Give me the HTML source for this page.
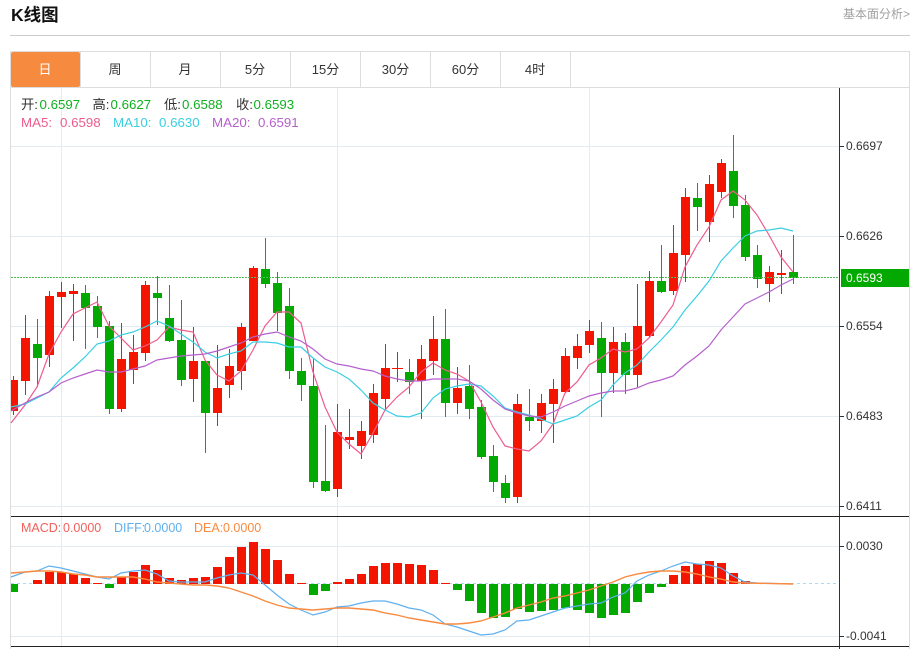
<!DOCTYPE html>
<html lang="zh"><head><meta charset="utf-8"><title>K线图</title>
<style>
html,body{margin:0;padding:0;background:#fff;width:915px;height:649px;overflow:hidden}
svg{position:absolute;left:0;top:0;display:block}
text{font-family:"Liberation Sans","Noto Sans CJK SC",sans-serif}
</style></head><body>
<svg width="915" height="649" viewBox="0 0 915 649" xmlns="http://www.w3.org/2000/svg">
<text x="11" y="21" font-size="17.500" font-weight="700" fill="#111">K线图</text>
<text x="843" y="18" font-size="12" fill="#a0a0a0">基本面分析&gt;</text>
<path d="M10 35.500H910" stroke="#ccc" fill="none"/>
<!-- frame -->
<path d="M10.500 51.500H909.500V649M10.500 51.500V649M10 87.500H910" stroke="#ddd" fill="none"/>
<path d="M80.500 52V87M150.500 52V87M220.500 52V87M290.500 52V87M360.500 52V87M430.500 52V87M500.500 52V87M570.500 52V87" stroke="#ddd" fill="none"/>
<rect x="11" y="52" width="69" height="35" rx="2" fill="#f68b3f"/>
<g font-size="13" text-anchor="middle" fill="#333">
<text x="45" y="74" fill="#fff">日</text><text x="115" y="74">周</text><text x="185" y="74">月</text><text x="255" y="74">5分</text><text x="325.500" y="74">15分</text><text x="395.500" y="74">30分</text><text x="465.500" y="74">60分</text><text x="535" y="74">4时</text>
</g>
<!-- grid -->
<path d="M11 146.500H839M11 236.500H839M11 326.500H839M11 416.500H839M11 506.500H839M11 546.500H839M11 636.500H839M61.500 88V646M337.500 88V646M589.500 88V646" stroke="#e1ebf3" fill="none"/>
<!-- candles -->
<path d="M13.500 376V415M25.500 315V395M49.500 291V367M61.500 282V328M73.500 284V341M121.500 323V412M133.500 335V384M145.500 281V361M193.500 327V402M217.500 345V426M229.500 349V398M241.500 323V390M253.500 266V341M337.500 404V497M349.500 409V449M361.500 421V459M373.500 384V443M385.500 344V410M397.500 352V382M421.500 345V419M433.500 316V375M457.500 367V414M517.500 394V503M541.500 394V433M553.500 379V443M565.500 348V393M577.500 334V369M589.500 320V353M613.500 327V393M637.500 284V387M649.500 271V338M673.500 225V295M685.500 188V282M709.500 175V242M721.500 159V198M769.500 266V302M781.500 250V294" stroke="#f01a08" stroke-width="1" fill="none"/>
<path d="M37.500 319V387M85.500 285V349M97.500 296V338M109.500 321V414M157.500 276V325M169.500 285V342M181.500 300V386M205.500 361V453M265.500 238V288M277.500 272V331M289.500 288V379M301.500 358V401M313.500 358V488M325.500 425V492M409.500 359V394M445.500 309V417M469.500 365V419M481.500 400V459M493.500 445V492M505.500 475V503M529.500 389V431M601.500 322V417M625.500 333V394M661.500 245V293M697.500 183V231M733.500 135V218M745.500 195V261M757.500 245V288M793.500 235V284" stroke="#0aa80a" stroke-width="1" fill="none"/>
<path d="M14.500 380V411" stroke="#f41500" stroke-width="7" fill="none"/>
<path d="M25.500 338V381M49.500 296V355M61.500 292V297M73.500 291V294M121.500 359V409M133.500 352V370M145.500 285V353M193.500 361V379M217.500 388V413M229.500 366V385M241.500 327V371M253.500 268V341M337.500 432V489M349.500 437V440M361.500 431V446M373.500 393V435M385.500 368V399M421.500 359V381M433.500 339V361M457.500 388V403M517.500 404V497M541.500 403V421M553.500 389V404M565.500 356V392M577.500 346V358M589.500 331V345M613.500 342V373M637.500 326V375M649.500 281V336M673.500 253V291M685.500 197V255M709.500 184V222M721.500 163V192M769.500 272V284M781.500 273V275" stroke="#f41500" stroke-width="9" fill="none"/>
<path d="M392 368.500H403" stroke="#f41500" stroke-width="1" fill="none"/>
<path d="M37.500 344V358M85.500 293V308M97.500 306V327M109.500 326V409M157.500 293V298M169.500 318V341M181.500 340V380M205.500 361V413M265.500 269V284M277.500 283V313M289.500 306V371M301.500 371V385M313.500 386V482M325.500 481V491M409.500 372V382M445.500 339V403M469.500 386V409M481.500 407V457M493.500 456V482M505.500 483V498M529.500 417V421M601.500 338V373M625.500 342V375M661.500 281V292M697.500 198V207M733.500 171V206M745.500 205V257M757.500 255V279M793.500 272V278" stroke="#03a800" stroke-width="9" fill="none"/>
<!-- last price line -->
<path d="M11 277.500H840" stroke="#4dbb55" stroke-dasharray="2 1" fill="none"/>
<!-- MA lines -->
<polyline fill="none" stroke="#ee5c8d" stroke-width="1.200" points="11,423 25,405 37,387 49,354 61,332 73,314 85,308 97,302 109,326 121,338 133,350 145,346 157,340 169,327 181,330 193,332 205,360 217,375 229,381 241,371 253,350 265,326 277,312 289,312 301,323 313,372 325,407 337,432 349,444 361,454 373,433 385,410 397,397 409,387 421,372 433,363 445,370 457,374 469,381 481,402 493,427 505,446 517,449 529,451 541,441 553,424 565,393 577,382 589,365 601,358 613,349 625,352 637,349 649,338 661,322 673,305 685,267 697,245 709,227 721,200 733,191 745,200 757,215 769,235 781,257 793,272"/>
<polyline fill="none" stroke="#3acfe2" stroke-width="1.200" points="11,407 25,404 37,398 49,392 61,378 73,368 85,357 97,344 109,341 121,335 133,332 145,327 157,321 169,326 181,334 193,342 205,352 217,358 229,354 241,351 253,342 265,342 277,343 289,347 301,347 313,358 325,367 337,372 349,379 361,390 373,403 385,410 397,416 409,417 421,413 433,398 445,389 457,386 469,384 481,386 493,396 505,408 517,412 529,415 541,419 553,424 565,420 577,416 589,407 601,400 613,385 625,373 637,365 649,352 661,340 673,327 685,310 697,296 709,281 721,261 733,248 745,236 757,231 769,230 781,228 793,231"/>
<polyline fill="none" stroke="#b660cc" stroke-width="1.200" points="11,411 25,403 37,397 49,392 61,383 73,378 85,374 97,370 109,372 121,372 133,369 145,366 157,360 169,358 181,356 193,355 205,354 217,351 229,347 241,343 253,337 265,334 277,332 289,337 301,341 313,349 325,359 337,364 349,366 361,369 373,371 385,376 397,379 409,381 421,381 433,379 445,379 457,379 469,381 481,389 493,400 505,409 517,413 529,416 541,417 553,412 565,406 577,401 589,396 601,393 613,391 625,391 637,388 649,383 661,380 673,376 685,365 697,356 709,346 721,330 733,317 745,304 757,298 769,292 781,285 793,279"/>
<!-- legend -->
<g font-size="13.300">
<text x="21" y="109" fill="#333">开:</text><text x="39.500" y="109" fill="#10b020">0.6597</text>
<text x="92.500" y="109" fill="#333">高:</text><text x="110.500" y="109" fill="#10b020">0.6627</text>
<text x="164" y="109" fill="#333">低:</text><text x="182" y="109" fill="#10b020">0.6588</text>
<text x="236" y="109" fill="#333">收:</text><text x="253.500" y="109" fill="#10b020">0.6593</text>
<text x="21" y="127" fill="#ee5c8d">MA5: <tspan x="60">0.6598</tspan></text>
<text x="113" y="127" fill="#3acfe2">MA10: <tspan x="159">0.6630</tspan></text>
<text x="212" y="127" fill="#b660cc">MA20: <tspan x="258">0.6591</tspan></text>
</g>
<!-- axis -->
<path d="M839.500 88V649" stroke="#333" fill="none"/>
<path d="M11 516.500H909M11 646.500H909" stroke="#222" fill="none"/>
<path d="M840 146.500H844M840 236.500H844M840 326.500H844M840 416.500H844M840 506.500H844M840 546.500H844M840 636.500H844" stroke="#333" fill="none"/>
<rect x="841" y="269" width="68" height="18" fill="#03a800"/>
<g font-size="12" fill="#333">
<text x="846" y="150">0.6697</text><text x="846" y="240">0.6626</text><text x="846" y="330">0.6554</text><text x="846" y="420">0.6483</text><text x="846" y="510">0.6411</text>
<text x="846" y="282" fill="#fff">0.6593</text>
<text x="846" y="550">0.0030</text><text x="846" y="640">-0.0041</text>
</g>
<!-- MACD -->
<path d="M11 583.500H839" stroke="#a9dcf2" stroke-dasharray="3 3" fill="none"/>
<g font-size="12.500">
<text x="21" y="532" fill="#f2605c">MACD:</text><text x="63" y="532" fill="#f2605c">0.0000</text>
<text x="114" y="532" fill="#5fb0f0">DIFF:</text><text x="144" y="532" fill="#5fb0f0">0.0000</text>
<text x="194" y="532" fill="#f98a3f">DEA:</text><text x="223" y="532" fill="#f98a3f">0.0000</text>
</g>
<path d="M14.500 584V592" stroke="#03a800" stroke-width="7" fill="none"/>
<path d="M37.500 580V584M49.500 572V584M61.500 572V584M73.500 574V584M85.500 578V584M97.500 583V584M121.500 577V584M133.500 572V584M145.500 565V584M157.500 570V584M169.500 578V584M181.500 580V584M193.500 578V584M205.500 577V584M217.500 567V584M229.500 557V584M241.500 547V584M253.500 542V584M265.500 549V584M277.500 560V584M289.500 574V584M301.500 583V584M337.500 582V584M349.500 579V584M361.500 574V584M373.500 566V584M385.500 563V584M397.500 563V584M409.500 564V584M421.500 565V584M433.500 570V584M445.500 583V584M673.500 575V584M685.500 566V584M697.500 564V584M709.500 561V584M721.500 563V584M733.500 573V584M745.500 581V584" stroke="#f41500" stroke-width="9" fill="none"/>
<path d="M109.500 584V588M313.500 584V595M325.500 584V591M457.500 584V590M469.500 584V601M481.500 584V613M493.500 584V618M505.500 584V617M517.500 584V609M529.500 584V612M541.500 584V611M553.500 584V610M565.500 584V608M577.500 584V610M589.500 584V613M601.500 584V618M613.500 584V615M625.500 584V613M637.500 584V602M649.500 584V593M661.500 584V587" stroke="#03a800" stroke-width="9" fill="none"/>
<polyline fill="none" stroke="#5fb0f0" stroke-width="1.200" points="11,577 25,572 37,571 49,566 61,568 73,571 85,574 97,577 109,579 121,573 133,571 145,570 157,574 169,581 181,582 193,582 205,582 217,578 229,575 241,573 253,575 265,585 277,595 289,604 301,610 313,615 325,612 337,607 349,606 361,603 373,601 385,601 397,604 409,608 421,610 433,615 445,624 457,627 469,631 481,635 493,634 505,630 517,621 529,620 541,616 553,612 565,608 577,606 589,604 601,603 613,597 625,593 637,581 649,575 661,571 673,566 685,562 697,564 709,565 721,568 733,576 745,582 757,583 793,584"/>
<polyline fill="none" stroke="#f98a3f" stroke-width="1.400" points="11,573 25,572 37,571 49,571 61,572 73,574 85,575 97,577 109,577 121,577 133,577 145,579 157,582 169,583 181,584 193,585 205,585 217,586 229,588 241,592 253,596 265,601 277,605 289,608 301,609 313,610 325,609 337,608 349,608 361,609 373,610 385,613 397,615 409,618 421,620 433,622 445,624 457,624 469,623 481,621 493,617 505,613 517,608 529,605 541,602 553,598 565,596 577,593 589,590 601,586 613,582 625,577 637,574 649,572 661,571 673,571 685,572 697,574 709,577 721,579 733,582 745,583 793,584"/>
</svg>
</body></html>
